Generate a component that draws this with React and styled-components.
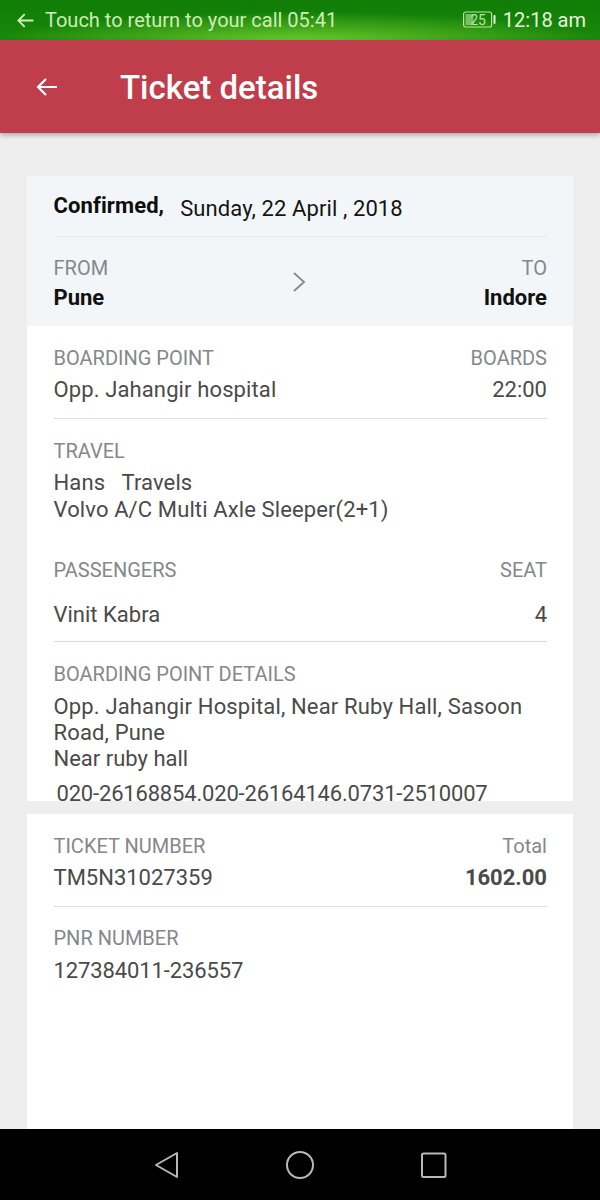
import React from "react";
import styled, { createGlobalStyle } from "styled-components";

const GlobalStyle = createGlobalStyle`
  html, body { margin: 0; padding: 0; }
  body { font-family: Roboto, "Liberation Sans", sans-serif; background: #eeeeee; }
`;

const Screen = styled.div`
  width: 600px;
  height: 1200px;
  display: flex;
  flex-direction: column;
  overflow: hidden;
  background: #eeeeee;
`;

const StatusBar = styled.div`
  height: 40px;
  flex: none;
  display: flex;
  align-items: center;
  justify-content: space-between;
  padding: 0 14px 0 16px;
  color: #cdeeb4;
  font-size: 20px;
  background: radial-gradient(ellipse 310px 32px at 300px 44px, #74d32e 0%, #45a81c 50%, transparent 100%),
    linear-gradient(#0f7c06, #1a880b);
`;

const CallNotice = styled.div`
  display: flex;
  align-items: center;
  gap: 10px;
`;

const StatusRight = styled.div`
  display: flex;
  align-items: center;
  gap: 7px;
  color: #e6f7da;
  font-size: 20px;
`;

const Header = styled.header`
  height: 93px;
  flex: none;
  display: flex;
  align-items: center;
  gap: 61px;
  padding: 0 0 0 35px;
  background: #c03d4c;
  box-shadow: 0 2px 5px rgba(0, 0, 0, 0.3);
  position: relative;
`;

const Title = styled.h1`
  margin: 1px 0 0;
  color: #fff;
  font-size: 33px;
  font-weight: 500;
`;

const Content = styled.main`
  flex: 1;
  min-height: 0;
  display: flex;
  flex-direction: column;
  gap: 13px;
  padding: 43px 27px 0;
`;

const Card = styled.section`
  background: #fff;
  overflow: hidden;
  flex: ${(p) => (p.$grow ? 1 : "none")};
  height: ${(p) => (p.$h ? `${p.$h}px` : "auto")};
`;

const Summary = styled.div`
  background: #f3f6f8;
  height: 150px;
  padding: 0 26px 0 26.5px;
  box-sizing: border-box;
`;

const DateRow = styled.div`
  height: 60px;
  display: flex;
  gap: 16px;
  align-items: center;
  border-bottom: 1px solid #e6eaec;
`;

const Confirmed = styled.span`
  font-size: 22px;
  font-weight: 700;
  color: #0d0d0d;
  letter-spacing: 0.1px;
  margin-bottom: 1px;
`;

const DateText = styled.span`
  font-size: 22px;
  color: #141414;
  letter-spacing: 0.1px;
  margin-top: 5px;
`;

const RouteRow = styled.div`
  display: flex;
  justify-content: space-between;
  align-items: center;
  padding-top: 19px;
`;

const Chevron = styled.svg`
  margin: 0 0 8px 7px;
`;

const Col = styled.div`
  display: flex;
  flex-direction: column;
  align-items: ${(p) => (p.$right ? "flex-end" : "flex-start")};
`;

const Label = styled.div`
  font-size: 20px;
  line-height: 24px;
  color: #84888b;
`;

const Strong = styled.div`
  font-size: 22px;
  line-height: 36px;
  font-weight: 700;
  color: #111;
`;

const Section = styled.div`
  margin: 0 26px 0 26.5px;
  padding-top: ${(p) => p.$top}px;
  padding-bottom: ${(p) => p.$bottom}px;
  border-bottom: ${(p) => (p.$line ? "1px solid #dcdcdc" : "none")};
`;

const SplitRow = styled.div`
  display: flex;
  justify-content: space-between;
  align-items: flex-start;
`;

const Value = styled.div`
  font-size: 22px;
  line-height: ${(p) => p.$lh || 26}px;
  color: #4a4a4a;
  margin-top: ${(p) => p.$mt || 0}px;
  margin-left: ${(p) => p.$ml || 0}px;
  letter-spacing: ${(p) => p.$ls || 0}px;
  white-space: pre-wrap;
`;

const BoldValue = styled(Value)`
  font-weight: 700;
`;

const NavBar = styled.nav`
  height: 71px;
  flex: none;
  background: #000;
  display: flex;
  align-items: center;
  justify-content: center;
  gap: 106px;
`;

const BackArrow = ({ size, width }) => (
  <svg width={size} height={size} viewBox="0 0 24 24" fill="none" stroke="currentColor" strokeWidth={width}>
    <path d="M22 12H3M11 4l-8 8 8 8" />
  </svg>
);

const BackButton = styled.span`
  display: flex;
  color: #fff;
`;

const Battery = () => (
  <svg width="33" height="18" viewBox="0 0 33 18">
    <rect x="0.6" y="1" width="28" height="15" rx="2" fill="none" stroke="#b5e59a" strokeWidth="1.2" />
    <rect x="2.5" y="3" width="8" height="11" fill="#9fd98a" opacity="0.7" />
    <rect x="30.5" y="4" width="2" height="9" rx="1" fill="#e6f7da" />
    <text x="15" y="14" fontSize="14" textAnchor="middle" fill="#b5e59a" fontFamily="Roboto, sans-serif">25</text>
  </svg>
);

const NavIcon = ({ children }) => (
  <svg width="28" height="28" viewBox="0 0 28 28" fill="none" stroke="#b8b8b8" strokeWidth="2" strokeLinejoin="round">
    {children}
  </svg>
);

export default function App() {
  return (
    <Screen>
      <GlobalStyle />
      <StatusBar>
        <CallNotice>
          <BackArrow size={19} width={2.4} />
          <span>Touch to return to your call 05:41</span>
        </CallNotice>
        <StatusRight>
          <Battery />
          <span>12:18 am</span>
        </StatusRight>
      </StatusBar>
      <Header>
        <BackButton>
          <BackArrow size={24} width={2.2} />
        </BackButton>
        <Title>Ticket details</Title>
      </Header>
      <Content>
        <Card $h={625}>
          <Summary>
            <DateRow>
              <Confirmed>Confirmed,</Confirmed>
              <DateText>Sunday, 22 April , 2018</DateText>
            </DateRow>
            <RouteRow>
              <Col>
                <Label>FROM</Label>
                <Strong>Pune</Strong>
              </Col>
              <Chevron width="14" height="22" viewBox="0 0 14 22" fill="none" stroke="#85898c" strokeWidth="1.8">
                <path d="M2 2l10 9-10 9" />
              </Chevron>
              <Col $right>
                <Label>TO</Label>
                <Strong>Indore</Strong>
              </Col>
            </RouteRow>
          </Summary>
          <Section $top={20} $bottom={15} $line>
            <SplitRow>
              <Label>BOARDING POINT</Label>
              <Label>BOARDS</Label>
            </SplitRow>
            <SplitRow>
              <Value $mt={7} $ls={0.12}>Opp. Jahangir hospital</Value>
              <Value $mt={7}>22:00</Value>
            </SplitRow>
          </Section>
          <Section $top={20} $bottom={0}>
            <Label>TRAVEL</Label>
            <Value $mt={7} $ls={0.12}>{"Hans   Travels"}</Value>
            <Value $mt={1} $ls={0.12}>Volvo A/C Multi Axle Sleeper(2+1)</Value>
          </Section>
          <Section $top={35} $bottom={13} $line>
            <SplitRow>
              <Label>PASSENGERS</Label>
              <Label>SEAT</Label>
            </SplitRow>
            <SplitRow>
              <Value $mt={20}>Vinit Kabra</Value>
              <Value $mt={20}>4</Value>
            </SplitRow>
          </Section>
          <Section $top={20} $bottom={0}>
            <Label>BOARDING POINT DETAILS</Label>
            <Value $mt={8} $ls={0.16}>Opp. Jahangir Hospital, Near Ruby Hall, Sasoon Road, Pune</Value>
            <Value>Near ruby hall</Value>
            <Value $mt={15} $ml={3} $lh={14} $ls={-0.18}>020-26168854.020-26164146.0731-2510007</Value>
          </Section>
        </Card>
        <Card $grow>
          <Section $top={20} $bottom={15} $line>
            <SplitRow>
              <Label>TICKET NUMBER</Label>
              <Label>Total</Label>
            </SplitRow>
            <SplitRow>
              <Value $mt={7}>TM5N31027359</Value>
              <BoldValue $mt={7}>1602.00</BoldValue>
            </SplitRow>
          </Section>
          <Section $top={19} $bottom={0}>
            <Label>PNR NUMBER</Label>
            <Value $mt={8} $ls={-0.12}>127384011-236557</Value>
          </Section>
        </Card>
      </Content>
      <NavBar>
        <NavIcon>
          <path d="M4 14 25 2v24z" />
        </NavIcon>
        <NavIcon>
          <circle cx="14" cy="14" r="13" />
        </NavIcon>
        <NavIcon>
          <rect x="2" y="2.5" width="23.5" height="23.5" rx="1.5" />
        </NavIcon>
      </NavBar>
    </Screen>
  );
}
